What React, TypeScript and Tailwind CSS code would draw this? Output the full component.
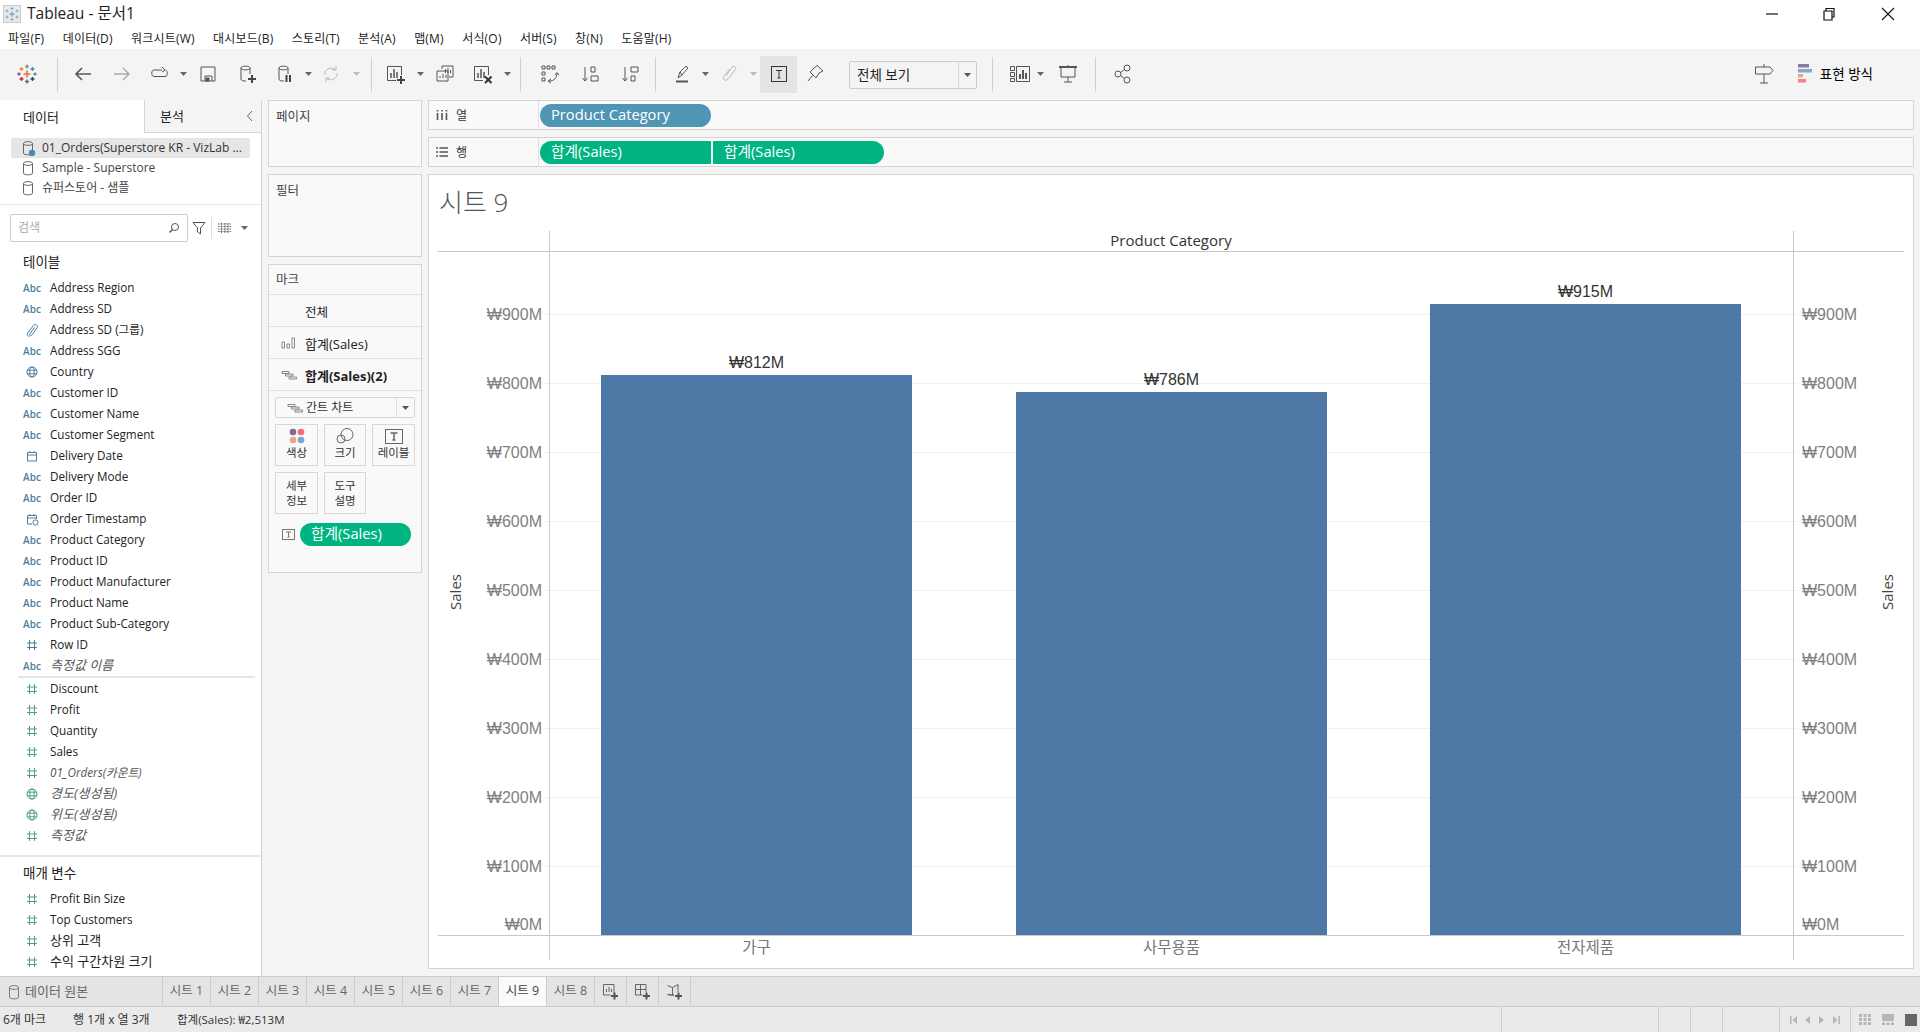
import React from "react";

const S = "#555";
type IP = { children: React.ReactNode; w?: number; h?: number };
const Ic = ({ children, w = 20, h = 20 }: IP) => (
  <svg width={w} height={h} viewBox={`0 0 ${w} ${h}`} fill="none" stroke={S} strokeWidth="1" className="shrink-0">{children}</svg>
);
const Caret = ({ c = "#666" }: { c?: string }) => (
  <svg width="7" height="4" viewBox="0 0 7 4" className="shrink-0"><path d="M0 0h7L3.5 4z" fill={c} /></svg>
);
const Sep = () => <div className="w-px h-[35px] bg-[#cfcfcf] shrink-0" />;

const PlusMark = ({ x, y, s, c, w = 1.4 }: { x: number; y: number; s: number; c: string; w?: number }) => (
  <path d={`M${x - s} ${y}H${x + s}M${x} ${y - s}V${y + s}`} stroke={c} strokeWidth={w} />
);
const TableauLogo = () => (
  <svg width="20" height="20" viewBox="0 0 20 20" fill="none">
    <PlusMark x={10} y={10} s={3.5} c="#e8762c" w={1.6} />
    <PlusMark x={10} y={2.5} s={2} c="#7099a6" />
    <PlusMark x={10} y={17.5} s={2} c="#5b6591" />
    <PlusMark x={4.5} y={5} s={2} c="#eb912b" />
    <PlusMark x={15.5} y={5} s={2} c="#59879b" />
    <PlusMark x={4.5} y={15} s={2} c="#c72035" />
    <PlusMark x={15.5} y={15} s={2} c="#1f447e" />
    <PlusMark x={2} y={10} s={1.6} c="#7c4a8b" />
    <PlusMark x={18} y={10} s={1.6} c="#5d8a6a" />
  </svg>
);
const WinLogo = () => (
  <svg width="18" height="18" viewBox="0 0 18 18" fill="none">
    <rect x="0.5" y="0.5" width="17" height="17" fill="#e8e8e8" stroke="#ccc" />
    <PlusMark x={9} y={9} s={2.6} c="#7fa8c9" />
    <PlusMark x={9} y={3.5} s={1.5} c="#7fa8c9" w={1} />
    <PlusMark x={9} y={14.5} s={1.5} c="#7fa8c9" w={1} />
    <PlusMark x={4} y={6} s={1.5} c="#7fa8c9" w={1} />
    <PlusMark x={14} y={6} s={1.5} c="#7fa8c9" w={1} />
    <PlusMark x={4} y={12} s={1.5} c="#7fa8c9" w={1} />
    <PlusMark x={14} y={12} s={1.5} c="#7fa8c9" w={1} />
  </svg>
);
const Cyl = ({ c = "#666", children }: { c?: string; children?: React.ReactNode }) => (
  <svg width="14" height="16" viewBox="0 0 14 16" fill="none" stroke={c} className="shrink-0">
    <path d="M1.5 3.5C1.5 1 10.5 1 10.5 3.5V13C10.5 15.5 1.5 15.5 1.5 13ZM1.5 3.5C1.5 6 10.5 6 10.5 3.5" />
    {children}
  </svg>
);
const Slot = ({ cls, children, bg }: { cls: string; children?: React.ReactNode; bg?: string }) => (
  <div className={`${cls} ${bg || ""} h-[37px] pb-[2px] flex items-center justify-center shrink-0`}>{children}</div>
);
const BarMini = ({ children }: { children?: React.ReactNode }) => (
  <svg width="20" height="20" viewBox="0 0 20 20" fill="none" stroke={S} className="shrink-0">
    <path d="M15.5 11V2.5H1.5V16.5H10" />
    <path d="M5 14V9M8 14V5M11 14V8" strokeWidth="1.5" />
    {children}
  </svg>
);

const menu = ["파일(F)", "데이터(D)", "워크시트(W)", "대시보드(B)", "스토리(T)", "분석(A)", "맵(M)", "서식(O)", "서버(S)", "창(N)", "도움말(H)"];

function Toolbar() {
  return (
    <div className="h-[51px] bg-[#f4f4f4] flex items-center relative">
      <Slot cls="w-[54px]"><TableauLogo /></Slot>
      <div className="w-[3px]" />
      <Sep />
      <div className="w-[5px]" />
      <Slot cls="w-[39px]">
        <Ic><path d="M18 10H3M9 4L3 10L9 16" stroke="#555" strokeWidth="1.6" /></Ic>
      </Slot>
      <Slot cls="w-[39px]">
        <Ic><path d="M2 10H17M11 4L17 10L11 16" stroke="#aaa" strokeWidth="1.4" /></Ic>
      </Slot>
      <Slot cls="w-[37px]">
        <Ic><path d="M12 6H4C1 6 1 12.5 4 12.5H15C18 12.5 18 7 15.5 6M12 3L15 6L12 8" /></Ic>
      </Slot>
      <Slot cls="w-[10px]"><Caret /></Slot>
      <Slot cls="w-[40px]">
        <Ic><path d="M3 3H17V17H3ZM7 17V12H14V17" /><rect x="8" y="14" width="3" height="3" fill={S} /></Ic>
      </Slot>
      <Slot cls="w-[38px]">
        <Ic><path d="M4 4C4 1.5 13 1.5 13 4V10M4 4V15C4 17 7 17 9 17M4 4C4 6.5 13 6.5 13 4" /><path d="M11 15H19M15 11V19" stroke="#444" strokeWidth="2" /></Ic>
      </Slot>
      <Slot cls="w-[37px]">
        <Ic><path d="M4 4C4 1.5 13 1.5 13 4V10M4 4V15C4 17 7 17 9 17M4 4C4 6.5 13 6.5 13 4" /><path d="M11.5 11V18M15 11V18" stroke="#444" strokeWidth="2" /></Ic>
      </Slot>
      <Slot cls="w-[10px]"><Caret /></Slot>
      <Slot cls="w-[36px]">
        <Ic><path d="M4 11C3 5 11 2 15 6M16 9C17 15 9 18 5 14M15 2V6H11M5 18V14H9" stroke="#bbb" /></Ic>
      </Slot>
      <Slot cls="w-[14px]"><Caret c="#bbb" /></Slot>
      <div className="w-[8px]" />
      <Sep />
      <div className="w-[4px]" />
      <Slot cls="w-[39px]">
        <BarMini><path d="M11 16H19M15 12V20" stroke="#444" strokeWidth="2" /></BarMini>
      </Slot>
      <Slot cls="w-[10px]"><Caret /></Slot>
      <Slot cls="w-[39px]">
        <Ic><path d="M7 5V2H18V13H14" /><path d="M10.5 9V5M13 9V4M15.5 9V6" /><path d="M2 7H13V17H2Z" /><path d="M5 14V12M8 14V10M11 14V11" /></Ic>
      </Slot>
      <Slot cls="w-[38px]">
        <BarMini><path d="M12 12.5L18.5 19M18.5 12.5L12 19" stroke="#333" strokeWidth="2" /></BarMini>
      </Slot>
      <Slot cls="w-[11px]"><Caret /></Slot>
      <div className="w-[7px]" />
      <Sep />
      <div className="w-[9px]" />
      <Slot cls="w-[39px]">
        <Ic><path d="M2 2h3v3H2zM7 2h3v3H7zM12 2h3v3h-3zM2 8h3v3H2zM2 14h3v3H2z" /><path d="M9 17C14 17 17 14 17 9M15 11L17 8.5L19 11M11 15L8 17L11 19" /></Ic>
      </Slot>
      <Slot cls="w-[41px]">
        <Ic><path d="M5 3V17M2.5 14L5 17L7.5 14" /><path d="M11 3H15V8H11ZM11 12H18V17H11Z" /></Ic>
      </Slot>
      <Slot cls="w-[39px]">
        <Ic><path d="M5 3V17M2.5 14L5 17L7.5 14" /><path d="M11 3H18V8H11ZM11 12H15V17H11Z" /></Ic>
      </Slot>
      <div className="w-[6px]" />
      <Sep />
      <div className="w-[8px]" />
      <Slot cls="w-[37px]">
        <Ic><path d="M5 14L7 8L13 2L15 4L9 11ZM7 8L9 11" /><path d="M3 17.5H15" stroke="#555" strokeWidth="2" /></Ic>
      </Slot>
      <Slot cls="w-[8px]"><Caret /></Slot>
      <Slot cls="w-[41px]">
        <Ic><path d="M6 12L12 3C15 1 17 4 15 6L8 15C5 18 2 15 4 12L10 5" stroke="#bbb" /></Ic>
      </Slot>
      <Slot cls="w-[7px]"><Caret c="#bbb" /></Slot>
      <div className="w-[3px]" />
      <Slot cls="w-[37px]" bg="bg-[#e4e4e4]">
        <Ic><rect x="2.5" y="2.5" width="15" height="15" stroke="#333" /><path d="M7 6.5H13M10 6.5V14M8.5 14H11.5" stroke="#333" /></Ic>
      </Slot>
      <Slot cls="w-[35px]">
        <Ic><path d="M8 5L12 1.5L18 7L14 9L11 14L5 8ZM7.5 11.5L3 17" /></Ic>
      </Slot>
      <div className="w-[17px]" />
      <div className="w-[128px] h-[28px] bg-[#f4f4f4] border border-[#cccccc] rounded-[2px] flex items-center shrink-0">
        <div className="flex-1 pl-[7px] pt-[1px] text-[13.5px] text-[#222]">전체 보기</div>
        <div className="w-[18px] h-full border-l border-[#d8d8d8] flex items-center justify-center"><Caret c="#555" /></div>
      </div>
      <div className="w-[15px]" />
      <Sep />
      <div className="w-[14px]" />
      <Slot cls="w-[26px]">
        <Ic w={22}><path d="M1.5 2.5h4v4h-4zM1.5 8.5h4v4h-4zM1.5 14.5h4v3h-4zM7.5 2.5H20.5V17.5H7.5Z" /><path d="M11 15V10M14 15V6M17 15V9" strokeWidth="2" /></Ic>
      </Slot>
      <div className="w-[2px]" />
      <Slot cls="w-[10px]"><Caret /></Slot>
      <Slot cls="w-[46px]">
        <Ic><path d="M1 3H19" strokeWidth="2" /><path d="M3 3V13H17V3M10 13V18M6 18H14M10 1V3" /></Ic>
      </Slot>
      <div className="w-[4px]" />
      <Sep />
      <div className="w-[12px]" />
      <Slot cls="w-[30px]">
        <Ic><circle cx="5" cy="10" r="3" /><circle cx="14" cy="4" r="3" /><circle cx="14" cy="16" r="3" /><path d="M7.5 8.5L11.5 5.5M7.5 11.5L11.5 14.5" /></Ic>
      </Slot>
      <div className="flex-1" />
      <div className="pb-[2px] flex"><Ic><path d="M10 0V3M10 10V19M6 19H14M1.5 3H16L19 6.5L16 10H1.5Z" /></Ic></div>
      <div className="w-[24px]" />
      <svg width="14" height="19" viewBox="0 0 14 19" className="shrink-0 mb-[2px]">
        <rect width="11" height="3.5" y="0" fill="#8b7aa0" /><rect width="14" height="3.5" y="5" fill="#86a8cd" /><rect width="5" height="3.5" y="10" fill="#f2a47c" /><rect width="8" height="3.5" y="15" fill="#f4808c" />
      </svg>
      <div className="ml-[8px] mr-[47px] text-[13.5px] text-black">표현 방식</div>
    </div>
  );
}

type F = { n: string; t: string; c?: string; i?: boolean };
const B = "#4e7d9b";
const G = "#4f9f86";
const dims: F[] = [
  { n: "Address Region", t: "abc" }, { n: "Address SD", t: "abc" }, { n: "Address SD (그룹)", t: "clip" }, { n: "Address SGG", t: "abc" },
  { n: "Country", t: "globe" }, { n: "Customer ID", t: "abc" }, { n: "Customer Name", t: "abc" }, { n: "Customer Segment", t: "abc" },
  { n: "Delivery Date", t: "cal" }, { n: "Delivery Mode", t: "abc" }, { n: "Order ID", t: "abc" }, { n: "Order Timestamp", t: "calt" },
  { n: "Product Category", t: "abc" }, { n: "Product ID", t: "abc" }, { n: "Product Manufacturer", t: "abc" }, { n: "Product Name", t: "abc" },
  { n: "Product Sub-Category", t: "abc" }, { n: "Row ID", t: "hash", c: B }, { n: "측정값 이름", t: "abc", i: true },
];
const meas: F[] = [
  { n: "Discount", t: "hash" }, { n: "Profit", t: "hash" }, { n: "Quantity", t: "hash" }, { n: "Sales", t: "hash" },
  { n: "01_Orders(카운트)", t: "hash", i: true }, { n: "경도(생성됨)", t: "globe", c: G, i: true }, { n: "위도(생성됨)", t: "globe", c: G, i: true }, { n: "측정값", t: "hash", i: true },
];
const params: F[] = [{ n: "Profit Bin Size", t: "hash" }, { n: "Top Customers", t: "hash" }, { n: "상위 고객", t: "hash" }, { n: "수익 구간차원 크기", t: "hash" }];

function FIcon({ t, c }: { t: string; c?: string }) {
  if (t === "abc") return <span className="text-[10px] font-semibold text-[#4e7d9b] leading-none">Abc</span>;
  const col = c || (t === "hash" ? G : B);
  return (
    <svg width="14" height="14" viewBox="0 0 14 14" fill="none" stroke={col}>
      {t === "hash" && <path d="M4.5 2V12M9.5 2V12M2 5H12M2 9.5H12" />}
      {t === "globe" && <><circle cx="7" cy="7" r="5" /><ellipse cx="7" cy="7" rx="2.2" ry="5" /><path d="M2 5.2H12M2 8.8H12" /></>}
      {t === "clip" && <path d="M9.5 4.5L5 10.5C4 12 6 13 7 11.8L12 5C13.5 2.5 10.5 0 8.5 2.5L3 9.5C1.5 12 3 13.8 5 13" />}
      {t === "cal" && <path d="M2.5 3.5H11.5V12H2.5ZM2.5 6H11.5M5 2V4M9 2V4" />}
      {t === "calt" && <><path d="M7 12H2.5V3.5H11.5V7M2.5 6H11.5M5 2V4M9 2V4" /><circle cx="10.5" cy="10.5" r="2.6" /></>}
    </svg>
  );
}
const Row = ({ f }: { f: F }) => (
  <div className="h-[21px] flex items-center">
    <div className="w-[24px] ml-[20px] mr-[6px] flex justify-center"><FIcon t={f.t} c={f.c} /></div>
    <span className={`${/^[0-9A-Za-z]/.test(f.n) ? "text-[11.7px]" : "text-[13px]"} ${f.i ? "italic text-[#555]" : "text-[#222]"}`}>{f.n}</span>
  </div>
);

function LeftPanel() {
  return (
    <div className="w-[262px] shrink-0 bg-white border-r border-[#d4d4d4] flex flex-col">
      <div className="h-[33px] flex">
        <div className="w-[144px] pl-[23px] pt-[2px] flex items-center text-[13px] text-[#222]">데이터</div>
        <div className="flex-1 bg-[#f4f4f4] border-l border-b border-[#d4d4d4] flex items-center pl-[15px] pt-[2px] text-[13px] text-[#222] relative">
          분석
          <svg width="8" height="12" viewBox="0 0 8 12" fill="none" stroke="#666" className="absolute right-[7px] top-[10px]"><path d="M6 1L1.5 6L6 11" /></svg>
        </div>
      </div>
      <div className="pt-[5px] h-[72px] border-b border-[#e8e8e8]">
        <div className="h-[20px] mx-[11px] w-[239px] bg-[#e6e6e6] flex items-center pl-[11px] gap-[6px] text-[12px] text-[#333]">
          <Cyl><circle cx="10" cy="13" r="3.2" fill="#4a8bb0" stroke="none" /></Cyl>
          <span className="whitespace-nowrap">01_Orders(Superstore KR - VizLab ...</span>
        </div>
        <div className="h-[20px] mx-[11px] flex items-center pl-[11px] gap-[6px] text-[12px] text-[#444]"><Cyl /><span>Sample - Superstore</span></div>
        <div className="h-[20px] mx-[11px] flex items-center pl-[11px] gap-[6px] text-[12px] text-[#444]"><Cyl /><span>슈퍼스토어 - 샘플</span></div>
      </div>
      <div className="mt-[9px] h-[28px] flex items-center pl-[10px]">
        <div className="w-[178px] h-[28px] border border-[#cccccc] rounded-[2px] flex items-center justify-between px-[7px]">
          <span className="text-[12px] text-[#aaa]">검색</span>
          <svg width="12" height="12" viewBox="0 0 12 12" fill="none" stroke="#555"><circle cx="7" cy="5" r="3.5" /><path d="M4.5 7.5L1.5 10.5" strokeWidth="1.4" /></svg>
        </div>
        <svg width="14" height="14" viewBox="0 0 14 14" fill="none" stroke="#555" className="ml-[4px]"><path d="M1 1.5H13L8.5 7V13L5.5 11V7Z" /></svg>
        <div className="w-px h-[22px] bg-[#ddd] ml-[5px]" />
        <svg width="13" height="10" viewBox="0 0 13 10" fill="none" stroke="#666" className="ml-[6px]"><path d="M0 1H13M0 3.5H13M0 6H13M0 8.5H13M3.5 0V10M7 0V10M10 0V10" strokeDasharray="1 0.5" /></svg>
        <div className="ml-[10px]"><Caret /></div>
      </div>
      <div className="h-[20px] mt-[10px] pl-[23px] flex items-center text-[13.5px] text-[#222]">테이블</div>
      <div className="pt-[5px]">
        {dims.map((f) => <Row key={f.n} f={f} />)}
        <div className="h-[2px] ml-[18px] mr-[6px] bg-[#e4e4e4]" />
        {meas.map((f) => <Row key={f.n} f={f} />)}
      </div>
      <div className="mt-[9px] border-t-2 border-[#e8e8e8]" />
      <div className="h-[31px] pl-[23px] pt-[2px] pb-[1px] flex items-center text-[13.5px] text-[#222]">매개 변수</div>
      {params.map((f) => <Row key={f.n} f={f} />)}
    </div>
  );
}

const CardLabel = ({ children }: { children: React.ReactNode }) => (
  <div className="pl-[7px] pt-[7px] text-[12.5px] text-[#444]">{children}</div>
);
const MBtn = ({ children, label }: { children?: React.ReactNode; label: React.ReactNode }) => (
  <div className="h-[42px] border border-[#d8d8d8] flex flex-col items-center justify-center text-[11.5px] leading-[15px] text-[#333]">
    {children}
    <div className="text-center">{label}</div>
  </div>
);
const MarkRow = ({ icon, children }: { icon?: React.ReactNode; children: React.ReactNode }) => (
  <div className="h-[32px] border-t border-[#e0e0e0] flex items-center">
    <div className="w-[36px] pl-[12px]">{icon}</div>
    <div>{children}</div>
  </div>
);
const GanttI = () => (
  <svg width="16" height="10" viewBox="0 0 16 10" fill="none" stroke="#888"><path d="M1 1.5H8V3.5H1ZM4.5 4H12V6H4.5ZM8 7H15.5V9H8Z" /></svg>
);

function MiddleColumn() {
  return (
    <div className="w-[154px] shrink-0 ml-[6px] flex flex-col gap-[7px]">
      <div className="h-[67px] bg-[#f9f9f9] border border-[#d4d4d4]"><CardLabel>페이지</CardLabel></div>
      <div className="h-[83px] bg-[#f9f9f9] border border-[#d4d4d4]"><CardLabel>필터</CardLabel></div>
      <div className="h-[309px] bg-[#f9f9f9] border border-[#d4d4d4]">
        <div className="h-[29px] pl-[7px] pt-[2px] flex items-center text-[12.5px] text-[#444]">마크</div>
        <MarkRow><span className="text-[12.5px] text-[#222]">전체</span></MarkRow>
        <MarkRow icon={<svg width="14" height="12" viewBox="0 0 14 12" fill="none" stroke="#888"><path d="M1 5H3.5V11H1ZM6 7H8.5V11H6ZM11 1H13.5V11H11Z" /></svg>}>
          <span className="text-[13px] text-[#222]">합계(Sales)</span>
        </MarkRow>
        <MarkRow icon={<GanttI />}><span className="text-[13px] font-bold text-[#222]">합계(Sales)(2)</span></MarkRow>
        <div className="border-t border-[#e0e0e0] px-[6px] pt-[6px]">
          <div className="h-[21px] border border-[#d4d4d4] rounded-[2px] flex items-center bg-[#f9f9f9]">
            <div className="w-[30px] pl-[11px]"><GanttI /></div>
            <span className="flex-1 pt-[1px] text-[12px] text-[#333]">간트 차트</span>
            <div className="w-[18px] h-full border-l border-[#e0e0e0] flex items-center justify-center"><Caret c="#555" /></div>
          </div>
          <div className="grid grid-cols-[43px_42px_43px] gap-x-[6px] gap-y-[6px] mt-[6px]">
            <MBtn label={<div className="mt-[1px]">색상</div>}>
              <svg width="16" height="16" viewBox="0 0 16 16" className="-mt-[2px]"><circle cx="4" cy="4" r="3.3" fill="#7b6a9b" /><circle cx="12" cy="4" r="3.3" fill="#f4687c" /><circle cx="4" cy="12" r="3.3" fill="#f2a47c" /><circle cx="12" cy="12" r="3.3" fill="#7fa4cf" /></svg>
            </MBtn>
            <MBtn label={<div className="mt-[1px]">크기</div>}>
              <svg width="18" height="16" viewBox="0 0 18 16" fill="none" stroke="#666" className="-mt-[2px]"><circle cx="11" cy="6.5" r="6" /><circle cx="5" cy="11" r="4" /></svg>
            </MBtn>
            <MBtn label={<div className="mt-[1px]">레이블</div>}>
              <svg width="18" height="15" viewBox="0 0 18 15" fill="none" className="-mt-[2px]"><rect x="0.5" y="0.5" width="17" height="14" stroke="#666" /><path d="M5.5 4H12.5M9 4V11M7.5 11H10.5" stroke="#666" strokeWidth="1.5" /></svg>
            </MBtn>
            <MBtn label={<>세부<br />정보</>} />
            <MBtn label={<>도구<br />설명</>} />
          </div>
          <div className="flex items-center mt-[9px]">
            <svg width="13" height="11" viewBox="0 0 13 11" fill="none" className="ml-[7px] mr-[5px]"><rect x="0.5" y="0.5" width="12" height="10" stroke="#777" /><path d="M4 3H9M6.5 3V8M5.5 8H7.5" stroke="#777" /></svg>
            <div className="w-[111px] h-[23px] rounded-full bg-[#00b482] text-white text-[14.7px] pl-[11px] pb-[2px] flex items-center">합계(Sales)</div>
          </div>
        </div>
      </div>
    </div>
  );
}

const Pill = ({ cls, children }: { cls: string; children: React.ReactNode }) => (
  <div className={`${cls} h-[23px] text-white text-[14.7px] pl-[11px] pb-[2px] flex items-center shrink-0`}>{children}</div>
);

const ticks = [900, 800, 700, 600, 500, 400, 300, 200, 100];
const bars = [
  { x: 172, w: 311, top: 144, v: "₩812M", lab: "가구", ly: 131 },
  { x: 587, w: 311, top: 161, v: "₩786M", lab: "사무용품", ly: 148 },
  { x: 1001, w: 311, top: 73, v: "₩915M", lab: "전자제품", ly: 60 },
];

function Chart() {
  const yy = (m: number) => 704 - (m / 100) * 69;
  return (
    <svg width="1484" height="729" viewBox="0 0 1484 729" className="block" fontFamily="'Liberation Sans','Noto Sans CJK KR',sans-serif">
      {ticks.map((t) => (
        <g key={t}>
          <path d={`M115 ${yy(t) + 0.5}H1369`} stroke="#f0f0f0" />
          <text x="113" y={yy(t) + 6} textAnchor="end" fontSize="16" fill="#808080">₩{t}M</text>
          <text x="1373" y={yy(t) + 6} fontSize="16" fill="#808080">₩{t}M</text>
        </g>
      ))}
      <text x="113" y="699" textAnchor="end" fontSize="16" fill="#808080">₩0M</text>
      <text x="1373" y="699" fontSize="16" fill="#808080">₩0M</text>
      {bars.map((b) => (
        <g key={b.lab}>
          <rect x={b.x} y={b.top} width={b.w} height={704 - b.top} fill="#4e79a7" />
          <text x={b.x + b.w / 2} y={b.ly + 6} textAnchor="middle" fontSize="16" fill="#333">{b.v}</text>
          <text x={b.x + b.w / 2} y="722" textAnchor="middle" fontSize="15.5" fill="#777" fontFamily="'Noto Sans CJK KR',sans-serif">{b.lab}</text>
        </g>
      ))}
      <path d="M120.5 0V729M1364.5 0V729" stroke="#c8c8c8" />
      <path d="M9 20.5H1475M9 704.5H1475" stroke="#c8c8c8" />
      <text x="742" y="15" textAnchor="middle" fontSize="15" fontWeight="500" fill="#333" fontFamily="'Open Sans',sans-serif">Product Category</text>
      <text transform="translate(32 361) rotate(-90)" textAnchor="middle" fontSize="15" fill="#444" fontFamily="'Open Sans',sans-serif">Sales</text>
      <text transform="translate(1464 361) rotate(-90)" textAnchor="middle" fontSize="15" fill="#444" fontFamily="'Open Sans',sans-serif">Sales</text>
    </svg>
  );
}

function RightColumn() {
  return (
    <div className="flex-1 ml-[6px] mr-[6px] flex flex-col gap-[7px] min-w-0">
      <div className="h-[30px] bg-[#f9f9f9] border border-[#d4d4d4] flex items-center">
        <div className="w-[110px] h-full flex items-center border-r border-[#e0e0e0] pl-[7px] gap-[8px] text-[12px] text-[#333]">
          <svg width="12" height="12" viewBox="0 0 12 12" fill="none" stroke="#555"><path d="M1.5 1V2.5M1.5 4V11M6 1V2.5M6 4V11M10.5 1V2.5M10.5 4V11" strokeWidth="1.6" /></svg>
          <span className="pt-[2px]">열</span>
        </div>
        <Pill cls="ml-[1px] w-[171px] rounded-full bg-[#4e96b4]">Product Category</Pill>
      </div>
      <div className="h-[30px] bg-[#f9f9f9] border border-[#d4d4d4] flex items-center">
        <div className="w-[110px] h-full flex items-center border-r border-[#e0e0e0] pl-[7px] gap-[8px] text-[12px] text-[#333]">
          <svg width="12" height="12" viewBox="0 0 12 12" fill="none" stroke="#555"><path d="M0 2H2M3.5 2H12M0 6H2M3.5 6H12M0 10H2M3.5 10H12" strokeWidth="1.5" /></svg>
          <span className="pt-[2px]">행</span>
        </div>
        <Pill cls="ml-[1px] w-[171px] rounded-l-full bg-[#00b482]">합계(Sales)</Pill>
        <Pill cls="ml-[2px] w-[171px] rounded-r-full bg-[#00b482]">합계(Sales)</Pill>
      </div>
      <div className="h-[795px] bg-white border border-[#d4d4d4] flex flex-col">
        <div className="h-[56px] pl-[10px] pt-[9px] text-[26px] leading-[36px] font-light text-[#555]">시트 9</div>
        <Chart />
      </div>
    </div>
  );
}

const Tab = ({ cls, children, active }: { cls: string; children: React.ReactNode; active?: boolean }) => (
  <div className={`${cls} h-full border-r border-[#cccccc] flex items-center justify-center text-[12.5px] shrink-0 ${active ? "bg-[#fafafa] text-[#444]" : "text-[#666]"}`}>{children}</div>
);

function Tabs() {
  return (
    <div className="h-[31px] bg-[#e4e4e4] border-y border-[#cccccc] flex">
      <div className="w-[163px] h-full border-r border-[#cccccc] flex items-center pl-[8px] gap-[3px] text-[13px] text-[#666] shrink-0"><Cyl c="#777" /><span>데이터 원본</span></div>
      <Tab cls="w-[48px]">시트 1</Tab>
      <Tab cls="w-[48px]">시트 2</Tab>
      <Tab cls="w-[48px]">시트 3</Tab>
      <Tab cls="w-[48px]">시트 4</Tab>
      <Tab cls="w-[48px]">시트 5</Tab>
      <Tab cls="w-[48px]">시트 6</Tab>
      <Tab cls="w-[48px]">시트 7</Tab>
      <Tab cls="w-[48px]" active>시트 9</Tab>
      <Tab cls="w-[48px]">시트 8</Tab>
      <Tab cls="w-[32px]">
        <Ic w={17} h={17}><path d="M12 10V1.5H1.5V12H8.5" stroke="#666" /><path d="M4.5 9V6M7 9V4M9.5 9V6" stroke="#666" /><path d="M9 13H16M12.5 9.5V16.5" stroke="#555" strokeWidth="2" /></Ic>
      </Tab>
      <Tab cls="w-[32px]">
        <Ic w={17} h={17}><path d="M12 9V1.5H1.5V12H8.5M1.5 6.5H12M6.5 1.5V12" stroke="#666" /><path d="M9 13H16M12.5 9.5V16.5" stroke="#555" strokeWidth="2" /></Ic>
      </Tab>
      <Tab cls="w-[32px]">
        <Ic w={17} h={17}><path d="M1.5 2.5L6.5 4.5L12 1.5V9M8 12L6.5 12.5L1.5 11.5ZM6.5 4.5V12.5" stroke="#666" /><path d="M9 13H16M12.5 9.5V16.5" stroke="#555" strokeWidth="2" /></Ic>
      </Tab>
    </div>
  );
}

const N = "#b5b5b5";
function Status() {
  return (
    <div className="flex-1 bg-[#eaeaea] flex items-center text-[12px] text-[#333]">
      <span className="ml-[3px] w-[70px] whitespace-nowrap">6개 마크</span>
      <span className="w-[104px] whitespace-nowrap">행 1개 x 열 3개</span>
      <span className="w-[1324px] text-[11.5px]">합계(Sales): ₩2,513M</span>
      <div className="w-[157px] h-full border-l border-[#cccccc]" />
      <div className="w-[32px] h-full border-l border-[#cccccc]" />
      <div className="w-[32px] h-full border-l border-[#cccccc]" />
      <div className="w-[57px] h-full border-l border-[#cccccc]" />
      <div className="w-[71px] h-full border-l border-[#cccccc] flex items-center justify-around px-[6px]">
        <svg width="7" height="8" viewBox="0 0 7 8"><path d="M0 0h1.5v8H0zM7 0v8L2.5 4z" fill={N} /></svg>
        <svg width="6" height="8" viewBox="0 0 6 8"><path d="M5 0v8L0 4z" fill={N} /></svg>
        <svg width="6" height="8" viewBox="0 0 6 8"><path d="M0 0v8l5-4z" fill={N} /></svg>
        <svg width="7" height="8" viewBox="0 0 7 8"><path d="M5.5 0H7v8H5.5zM0 0v8l4.5-4z" fill={N} /></svg>
      </div>
      <div className="flex-1 h-full border-l border-[#cccccc] flex items-center gap-[11px] pl-[8px]">
        <svg width="12" height="11" viewBox="0 0 12 11"><path d="M0 0h3v3H0zM4.5 0h3v3h-3zM9 0h3v3H9zM0 4h3v3H0zM4.5 4h3v3h-3zM9 4h3v3H9zM0 8h3v3H0zM4.5 8h3v3h-3zM9 8h3v3H9z" fill={N} /></svg>
        <svg width="12" height="11" viewBox="0 0 12 11"><path d="M0 0h12v7H0zM0 8.5h3V11H0zM4.5 8.5h3V11h-3zM9 8.5h3V11H9z" fill={N} /></svg>
        <svg width="12" height="12" viewBox="0 0 12 12"><path d="M0 0h12v12H0z" fill="#666" /></svg>
      </div>
    </div>
  );
}

export default function App() {
  return (
    <div className="w-[1920px] h-[1032px] overflow-hidden flex flex-col bg-white font-['Open_Sans','Noto_Sans_CJK_KR',sans-serif]">
      <div className="h-[25px] pt-[3px] flex items-center shrink-0 relative">
        <div className="ml-[3px] mr-[6px]"><WinLogo /></div>
        <span className="text-[15.5px] text-[#222]">Tableau - 문서1</span>
        <div className="flex-1" />
        <svg width="14" height="14" viewBox="0 0 14 14" fill="none" stroke="#111" className="mr-[43px]"><path d="M1 7H13" strokeWidth="1.2" /></svg>
        <svg width="14" height="14" viewBox="0 0 14 14" fill="none" stroke="#111" className="mr-[45px]"><path d="M2 4H10V13H2ZM4 4V1.5H12V10H10" strokeWidth="1.2" /></svg>
        <svg width="14" height="14" viewBox="0 0 14 14" fill="none" stroke="#111" className="mr-[25px]"><path d="M1 1L13 13M13 1L1 13" strokeWidth="1.1" /></svg>
      </div>
      <div className="h-[24px] pt-[4px] flex items-center gap-[18.3px] pl-[8px] text-[12px] tracking-[0.2px] text-[#222] shrink-0">
        {menu.map((m) => <span key={m}>{m}</span>)}
      </div>
      <Toolbar />
      <div className="h-[876px] flex bg-[#f4f4f4] shrink-0">
        <LeftPanel />
        <MiddleColumn />
        <RightColumn />
      </div>
      <Tabs />
      <Status />
    </div>
  );
}
